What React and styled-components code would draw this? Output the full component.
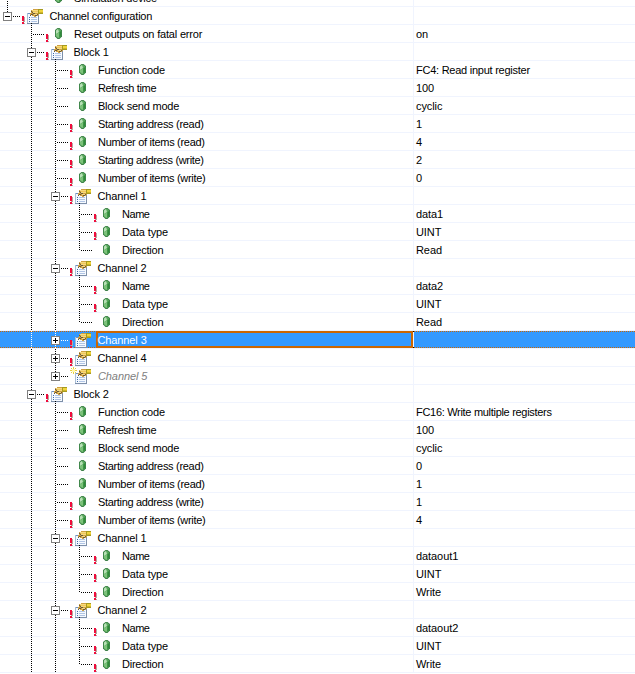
import React from "react";
import styled, { createGlobalStyle, css } from "styled-components";

const Global = createGlobalStyle`
  html, body { margin: 0; padding: 0; background: #fff; }
  body { width: 635px; height: 674px; overflow: hidden; }
`;

/* d: depth in the tree; lines: ancestor guide columns that pass through the row */
const rows = [
  { d: 1, t: "Simulation device", lines: [0], last: true },
  { d: 0, t: "Channel configuration", open: true, req: true, last: true, group: true },
  { d: 1, t: "Reset outputs on fatal error", v: "on", req: true },
  { d: 1, t: "Block 1", group: true, open: true, req: true },
  { d: 2, t: "Function code", v: "FC4: Read input register", req: true, lines: [1] },
  { d: 2, t: "Refresh time", v: "100", lines: [1] },
  { d: 2, t: "Block send mode", v: "cyclic", lines: [1] },
  { d: 2, t: "Starting address (read)", v: "1", req: true, lines: [1] },
  { d: 2, t: "Number of items (read)", v: "4", req: true, lines: [1] },
  { d: 2, t: "Starting address (write)", v: "2", req: true, lines: [1] },
  { d: 2, t: "Number of items (write)", v: "0", req: true, lines: [1] },
  { d: 2, t: "Channel 1", group: true, open: true, req: true, lines: [1] },
  { d: 3, t: "Name", v: "data1", req: true, lines: [1, 2] },
  { d: 3, t: "Data type", v: "UINT", req: true, lines: [1, 2] },
  { d: 3, t: "Direction", v: "Read", lines: [1, 2], last: true },
  { d: 2, t: "Channel 2", group: true, open: true, req: true, lines: [1] },
  { d: 3, t: "Name", v: "data2", req: true, lines: [1, 2] },
  { d: 3, t: "Data type", v: "UINT", req: true, lines: [1, 2] },
  { d: 3, t: "Direction", v: "Read", lines: [1, 2], last: true },
  { d: 2, t: "Channel 3", group: true, req: true, lines: [1], selected: true },
  { d: 2, t: "Channel 4", group: true, req: true, lines: [1] },
  { d: 2, t: "Channel 5", group: true, fresh: true, lines: [1], last: true },
  { d: 1, t: "Block 2", group: true, open: true, req: true },
  { d: 2, t: "Function code", v: "FC16: Write multiple registers", req: true, lines: [1] },
  { d: 2, t: "Refresh time", v: "100", lines: [1] },
  { d: 2, t: "Block send mode", v: "cyclic", lines: [1] },
  { d: 2, t: "Starting address (read)", v: "0", lines: [1] },
  { d: 2, t: "Number of items (read)", v: "1", lines: [1] },
  { d: 2, t: "Starting address (write)", v: "1", req: true, lines: [1] },
  { d: 2, t: "Number of items (write)", v: "4", req: true, lines: [1] },
  { d: 2, t: "Channel 1", group: true, open: true, req: true, lines: [1] },
  { d: 3, t: "Name", v: "dataout1", req: true, lines: [1, 2] },
  { d: 3, t: "Data type", v: "UINT", req: true, lines: [1, 2] },
  { d: 3, t: "Direction", v: "Write", req: true, lines: [1, 2], last: true },
  { d: 2, t: "Channel 2", group: true, open: true, req: true, lines: [1] },
  { d: 3, t: "Name", v: "dataout2", req: true, lines: [1, 2] },
  { d: 3, t: "Data type", v: "UINT", req: true, lines: [1, 2] },
  { d: 3, t: "Direction", v: "Write", req: true, lines: [1, 2], last: true },
];

/* letter spacing per text, in px */
const tracking = {
  "Simulation device": -0.2,
  "Channel configuration": -0.2,
  "Reset outputs on fatal error": -0.18,
  "Function code": -0.17,
  "Refresh time": -0.35,
  "Block send mode": -0.22,
  "Starting address (read)": -0.3,
  "Number of items (read)": -0.29,
  "Starting address (write)": -0.34,
  "Number of items (write)": -0.3,
  Name: -0.45,
  "Data type": -0.12,
  Direction: -0.23,
  "FC4: Read input register": -0.25,
  "FC16: Write multiple registers": -0.3,
};

const Viewport = styled.main`
  width: 635px;
  height: 674px;
  overflow: hidden;
  background: #fff;
  font: 11px/17px "Liberation Sans", Arial, sans-serif;
  color: #000;
`;

const Grid = styled.div`
  margin-top: -11px;
`;

const Row = styled.div`
  display: grid;
  grid-template-columns: 414px 221px;
  height: 18px;
  box-sizing: border-box;
  border-bottom: 1px solid #f0f4fe;
  ${(p) =>
    p.$selected &&
    css`
      color: #fff;
      background:
        repeating-linear-gradient(90deg, #cc6600 0 1px, #3399ff 1px 2px) 0 0 / 100% 1px no-repeat,
        repeating-linear-gradient(90deg, #cc6600 0 1px, #3399ff 1px 2px) 0 16px / 100% 1px no-repeat,
        #3399ff;
    `}
`;

const TreeCell = styled.div`
  display: flex;
  height: 17px;
  box-sizing: border-box;
  padding-right: 1px;
  background: ${(p) =>
    p.$selected
      ? "linear-gradient(#000 0 1px, #f0f4fe 1px 16px, #000 16px) right / 1px 100% no-repeat"
      : "linear-gradient(#f0f4fe, #f0f4fe) right / 1px 100% no-repeat"};
`;

const Guides = styled.svg`
  flex: none;
  display: block;
  overflow: visible;
`;

const Label = styled.span`
  box-sizing: border-box;
  height: 17px;
  white-space: nowrap;
  letter-spacing: ${(p) => p.$tracking}px;
  padding-left: ${(p) => (p.$leaf ? 1 : p.$fresh ? 1 : 0.4)}px;
  line-height: 18px;
  ${(p) =>
    p.$fresh &&
    css`
      color: #808080;
      font-style: italic;
    `}
  ${(p) =>
    p.$selected &&
    css`
      flex: 1;
      border: 2px solid #cc6600;
      padding-left: 0;
      margin-left: -1px;
      line-height: 14px;
      text-indent: -0.6px;
    `}
`;

const ValueCell = styled.div`
  padding-left: 2px;
  line-height: 18px;
  height: 17px;
  white-space: nowrap;
  letter-spacing: ${(p) => p.$tracking}px;
`;

function PropertyIcon({ x }) {
  return (
    <g transform={`translate(${x} 1)`} shapeRendering="crispEdges">
      <path d="M0 5h12v11H0z" fill="#7d8fa8" />
      <path d="M0 5h11v10H0z" fill="#a9bdd6" />
      <path d="M1 6h10v9H1z" fill="#f6faff" />
      <path d="M1 5h4v1H1z" fill="#6d90c4" />
      <path d="M2 9h1v1H2zM2 11h1v1H2zM2 13h1v1H2z" fill="#3d6aa8" />
      <path d="M4 9h6v1H4zM4 11h6v1H4zM4 13h6v1H4z" fill="#b0c4e4" />
      <path d="M4 2h2V1h6v1h4v4h-4v1h-1v1H9v1H7V8H5V7H3V5h1z" fill="#d0a040" />
      <path d="M5 2h7v1H5zM6 4h6v1H6zM7 6h3v1H7z" fill="#f6da80" />
      <path d="M6 3h6v1H6z" fill="#efc75c" />
      <path d="M4 3h1v1H4zM5 4h1v1H5zM6 5h2v1H6zM4 6h2v1H4zM8 7h2v1H8zM3 7h1v1H3zM10 6h1v1h-1z" fill="#66583c" />
      <path d="M11 1h5v5h-5z" fill="#a59a20" />
      <path d="M12 2h4v2h-4z" fill="#f0d43c" />
      <path d="M12 4h4v1h-4z" fill="#d0b428" />
    </g>
  );
}

function Gem({ x }) {
  return (
    <g transform={`translate(${x} 3)`}>
      <path d="M2.5 0h2L7 2v6.5L4.5 11h-2L0 8.5V2z" fill="#3c8048" />
      <path d="M2.7.8h1.6L6.2 2.4v5.8L4.2 10H2.8L.8 8.2V2.4z" fill="#58a85c" />
      <path d="M3 1 4 4 1 6V2.5z" fill="#b9e0b6" />
      <path d="M1 6.2 4 4.4V9.8L2.8 9.6 1 8z" fill="#7cc27a" />
      <path d="M4.4 4.2 6.2 3v5L4.4 9.6z" fill="#2f8a3a" />
    </g>
  );
}

function Dots({ x1, y1, x2, y2, color }) {
  return <line x1={x1} y1={y1} x2={x2} y2={y2} stroke={color} strokeDasharray="1 1" shapeRendering="crispEdges" />;
}

function TreeGuides({ row, first }) {
  const c = 7 + row.d * 24;
  const color = row.selected ? "#fff" : "#000";
  return (
    <Guides width={49 + row.d * 24} height="17">
      {(row.lines || []).map((l) => (
        <Dots key={l} x1={7.5 + l * 24} x2={7.5 + l * 24} y1={0} y2={18} color={color} />
      ))}
      <Dots x1={c + 0.5} x2={c + 0.5} y1={first ? -2 : 0} y2={row.last ? 10 : 18} color={color} />
      <Dots x1={row.group ? c + 6 : c + 2} x2={c + 14} y1={9.5} y2={9.5} color={color} />
      {row.group && (
        <g shapeRendering="crispEdges">
          <rect x={c - 4} y="5" width="9" height="9" fill="#808080" />
          <rect x={c - 3} y="6" width="7" height="7" fill="#fff" />
          <rect x={c - 2} y="9" width="5" height="1" fill="#000" />
          {!row.open && <rect x={c} y="7" width="1" height="5" fill="#000" />}
        </g>
      )}
      {row.req && (
        <g shapeRendering="crispEdges">
          <path d={`M${c + 16} 10h2v5h-2zM${c + 16} 16h2v1h-2z`} fill="#b8a8a0" />
          <path d={`M${c + 15} 9h2v5h-2zM${c + 15} 15h2v2h-2z`} fill="#f00c3c" />
        </g>
      )}
      {row.group ? <PropertyIcon x={c + 20} /> : <Gem x={c + 24} />}
      {row.fresh && (
        <g transform={`translate(${c + 15} 0)`} shapeRendering="crispEdges">
          <path d="M3 0h1v7H3zM0 3h7v1H0zM1 1h1v1H1zM5 1h1v1H5zM1 5h1v1H1zM5 5h1v1H5z" fill="#e8cf3e" />
          <path d="M2 2h3v3H2z" fill="#fff9b0" />
        </g>
      )}
    </Guides>
  );
}

export default function App() {
  return (
    <>
      <Global />
      <Viewport>
        <Grid>
          {rows.map((row, i) => (
            <Row key={i} $selected={row.selected}>
              <TreeCell $selected={row.selected}>
                <TreeGuides row={row} first={i > 0 && rows[i - 1].d < row.d} />
                <Label
                  $leaf={!row.group}
                  $fresh={row.fresh}
                  $selected={row.selected}
                  $tracking={tracking[row.t] ?? -0.1}
                >
                  {row.t}
                </Label>
              </TreeCell>
              <ValueCell $tracking={tracking[row.v] ?? -0.08}>{row.v}</ValueCell>
            </Row>
          ))}
        </Grid>
      </Viewport>
    </>
  );
}
